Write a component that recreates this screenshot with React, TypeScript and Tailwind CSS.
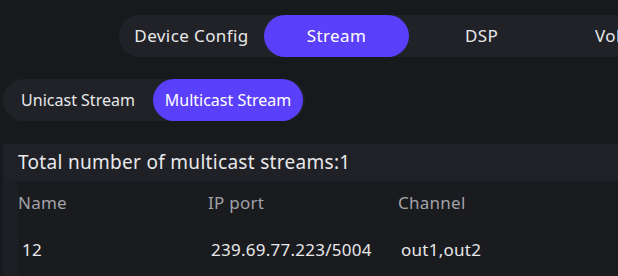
const mainTabs = ["Device Config", "Stream", "DSP", "Volume"];
const subTabs = ["Unicast Stream", "Multicast Stream"];

const rows = [{ name: "12", ip: "239.69.77.223/5004", channel: "out1,out2" }];

export default function App() {
  return (
    <div
      className="h-[276px] w-full overflow-hidden bg-[#18191d] text-[#e8e8ea]"
      style={{ fontFamily: '"Noto Sans", "Open Sans", sans-serif' }}
    >
      <div className="flex pl-[119px] pt-[15px]">
        <div className="flex h-[42px] shrink-0 rounded-full bg-[#212227]">
          {mainTabs.map((t) => (
            <div
              key={t}
              className={
                t === "Stream"
                  ? "flex w-[145px] shrink-0 items-center justify-center rounded-full bg-[#5b40fb] text-[17px] tracking-[0.4px] text-white"
                  : "flex w-[145px] shrink-0 items-center justify-center whitespace-nowrap rounded-full text-[17px] tracking-[0.4px]"
              }
            >
              {t}
            </div>
          ))}
        </div>
      </div>

      <div className="mt-[22px] flex pl-[3px]">
        <div className="flex h-[42px] rounded-full bg-[#212227] pr-[2px]">
          {subTabs.map((t) => (
            <div
              key={t}
              className={
                t === "Multicast Stream"
                  ? "flex w-[150px] items-center justify-center rounded-full bg-[#5b40fb] text-[16px] text-white"
                  : "flex w-[150px] items-center justify-center rounded-full text-[16px]"
              }
            >
              {t}
            </div>
          ))}
        </div>
      </div>

      <div className="ml-[3px] mt-[23px] bg-[#1e1f24]">
        <div className="flex h-[37px] items-center bg-[#202127] pl-[15px] text-[19px] tracking-[0.3px]">
          Total number of multicast streams:1
        </div>
        <div className="pl-[15px]">
          <div className="h-[100px] bg-[#1a1b1f] text-[17px] tracking-[0.25px]">
            <div className="flex h-[44px] items-center text-[#a2a2a8]">
              <div className="w-[190px]">Name</div>
              <div className="w-[190px]">IP port</div>
              <div>Channel</div>
            </div>
            {rows.map((r) => (
              <div key={r.name} className="flex h-[50px] items-center">
                <div className="w-[190px] pl-[4px]">{r.name}</div>
                <div className="w-[190px] pl-[3px]">{r.ip}</div>
                <div className="pl-[3px]">{r.channel}</div>
              </div>
            ))}
          </div>
        </div>
      </div>
    </div>
  );
}
